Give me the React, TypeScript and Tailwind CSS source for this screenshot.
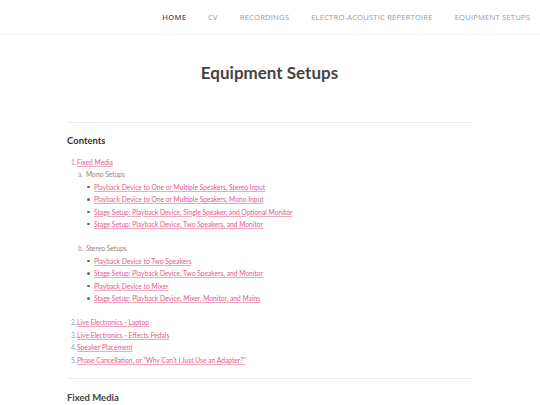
import React from 'react';

const navItems = ['HOME', 'CV', 'RECORDINGS', 'ELECTRO-ACOUSTIC REPERTOIRE', 'EQUIPMENT SETUPS'];

const mono = [
  'Playback Device to One or Multiple Speakers, Stereo Input',
  'Playback Device to One or Multiple Speakers, Mono Input',
  'Stage Setup: Playback Device, Single Speaker, and Optional Monitor',
  'Stage Setup: Playback Device, Two Speakers, and Monitor',
];

const stereo = [
  'Playback Device to Two Speakers',
  'Stage Setup: Playback Device, Two Speakers, and Monitor',
  'Playback Device to Mixer',
  'Stage Setup: Playback Device, Mixer, Monitor, and Mains',
];

const others = [
  'Live Electronics - Laptop',
  'Live Electronics - Effects Pedals',
  'Speaker Placement',
  'Phase Cancellation, or "Why Can\'t I Just Use an Adapter?"',
];

const Link = ({ children }: { children: React.ReactNode }) => (
  <a href="#" className="text-[#e4588a] underline decoration-[#f2a6c0] underline-offset-[1px]">
    {children}
  </a>
);

const SubList = ({ label, items, marker }: { label: string; items: string[]; marker: string }) => (
  <li className="flex flex-col mb-[12px]">
    <div className="flex">
      <span className="w-[8px] text-[#999]">{marker}</span>
      <span>{label}</span>
    </div>
    <ul className="pl-[9px]">
      {items.map((t) => (
        <li key={t} className="flex items-center">
          <span className="w-[7px] flex items-center">
            <span className="w-[2.5px] h-[2.5px] bg-[#666] rounded-full" />
          </span>
          <Link>{t}</Link>
        </li>
      ))}
    </ul>
  </li>
);

export default function App() {
  return (
    <div className="w-[540px] h-[405px] overflow-hidden bg-white" style={{ fontFamily: 'Lato, "Open Sans", sans-serif' }}>
      <header className="h-[35px] border-b border-[#f0f0f0] flex items-center justify-end pr-[10px]">
        <nav className="flex gap-[22px] text-[7.6px] tracking-[0.2px] pt-[1px]" style={{ fontFamily: '"Open Sans", sans-serif' }}>
          {navItems.map((n, i) => (
            <span key={n} className={i === 0 ? 'text-[#555] font-semibold' : 'text-[#999]'}>
              {n}
            </span>
          ))}
        </nav>
      </header>

      <main className="w-[405px] ml-[67px]">
        <h1 className="text-center text-[17px] font-bold text-[#444] mt-[28px] leading-[20px]">Equipment Setups</h1>

        <div className="border-t border-[#eeeeee] mt-[39px]" />

        <h2 className="text-[9.5px] font-bold text-[#333] mt-[12px] leading-[12px]">Contents</h2>

        <ol className="mt-[9px] pl-[4px] text-[6.7px] leading-[12.4px] text-[#888]">
          <li className="flex flex-col">
            <div className="flex">
              <span className="w-[6px] text-[#999]">1.</span>
              <Link>Fixed Media</Link>
            </div>
            <ol className="pl-[7px]">
              <SubList label="Mono Setups" items={mono} marker="a." />
              <SubList label="Stereo Setups" items={stereo} marker="b." />
            </ol>
          </li>
          {others.map((t, i) => (
            <li key={t} className="flex">
              <span className="w-[6px] text-[#999]">{i + 2}.</span>
              <Link>{t}</Link>
            </li>
          ))}
        </ol>

        <div className="border-t border-[#eeeeee] mt-[12px]" />

        <h2 className="text-[9.5px] font-bold text-[#444] mt-[13px] leading-[12px]">Fixed Media</h2>
      </main>
    </div>
  );
}
